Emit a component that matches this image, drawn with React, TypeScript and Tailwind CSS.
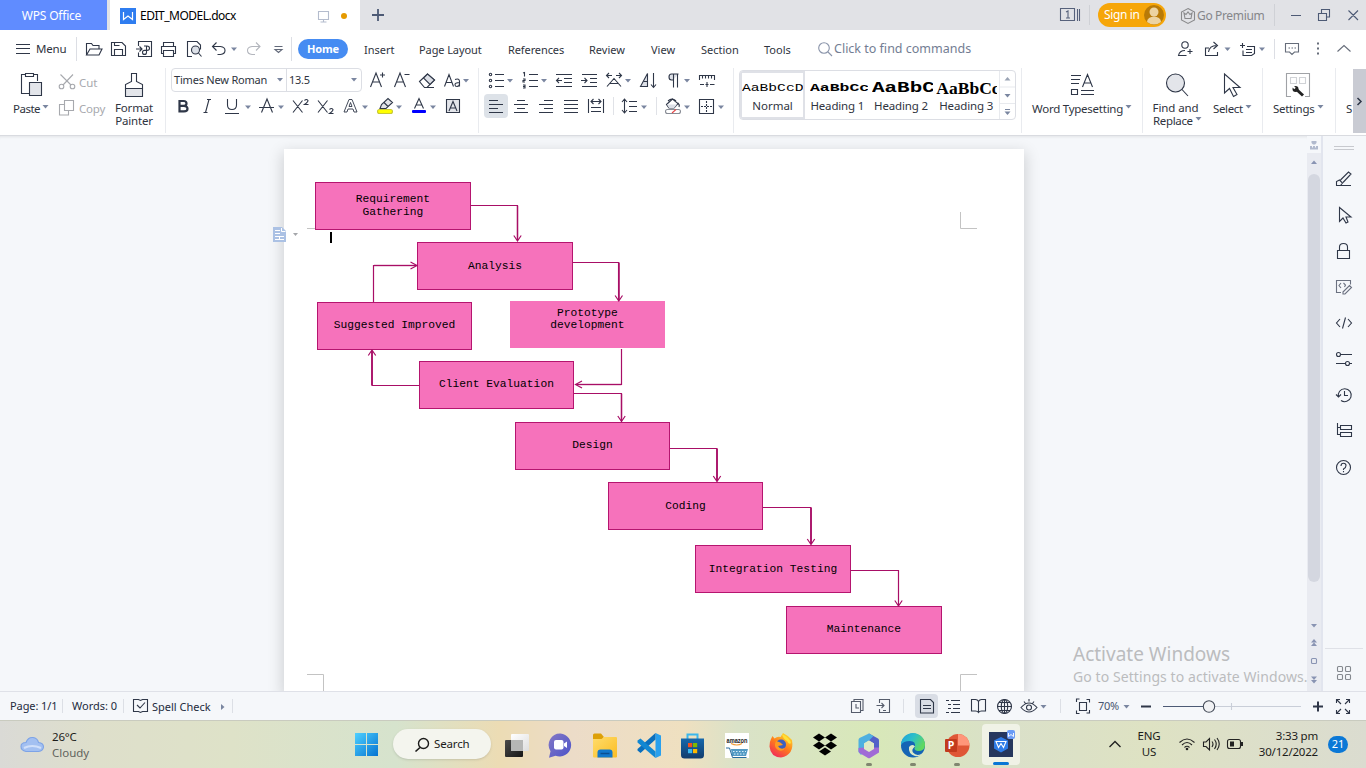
import React from "react";

const INK = "#2f3748";
const MUTED = "#7a86a0";

type IconProps = {
  x: number;
  w: number;
  y?: number;
  h?: number;
  color?: string;
  children?: React.ReactNode;
};

/* Toolbar glyphs share one window-wide coordinate space; each svg shows its own slot of it. */
function Icon({ x, w, y = 0, h = 24, color = INK, children }: IconProps) {
  return (
    <svg
      className="shrink-0"
      width={w}
      height={h}
      viewBox={`${x} ${y} ${w} ${h}`}
      fill="none"
      stroke={color}
      strokeWidth="1.1"
    >
      {children}
    </svg>
  );
}

const MenuIcon = (p: IconProps) => <Icon y={30} h={38} {...p} />;
const Row1 = (p: IconProps) => <Icon y={68} h={24} {...p} />;
const Row2 = (p: IconProps) => <Icon y={92} h={28} {...p} />;
const StatusIcon = (p: IconProps) => <Icon y={692} h={28} {...p} />;
const TaskIcon = (p: IconProps) => <Icon y={720} h={48} {...p} />;

function Down({ x, y }: { x: number; y: number }) {
  return <path d={`M${x} ${y}h6l-3 3.4z`} fill={MUTED} stroke="none" />;
}

function TitleBar() {
  return (
    <div className="flex h-[30px] items-center bg-[#e1e2e6] whitespace-nowrap">
      <div className="flex h-full w-[107px] items-center justify-center bg-[#608cff] pt-px pr-1 text-[12px] text-white">
        <span className="tracking-[-0.2px]">WPS Office</span>
      </div>
      <div className="ml-[3px] flex h-full w-[250px] items-center bg-white text-[12px] text-black">
        <Icon x={110} w={30} y={0} h={30}>
          <rect x="120" y="8" width="16" height="16" fill="#2f7df0" stroke="none" />
          <path d="M123.500 12v7.500l4.500-3.500 4.500 3.500V12" stroke="#fff" strokeWidth="1.200" />
        </Icon>
        <span className="w-[174px] pt-px tracking-[-0.500px]">EDIT_MODEL.docx</span>
        <Icon x={314} w={46} y={0} h={30} color="#b4bccd">
          <path d="M318.500 11.500h10v8h-10zM323.500 19.500v3M320.500 22h6" />
          <circle cx="344" cy="16" r="3" fill="#e59a00" stroke="none" />
        </Icon>
      </div>
      <Icon x={360} w={40} y={0} h={30}>
        <path d="M372 15h12M378 9v12" stroke="#4d5a75" strokeWidth="1.800" />
      </Icon>
      <div className="flex-1" />
      <Icon x={1050} w={39} y={0} h={30} color="#56617b">
        <path d="M1060.500 8.500h14v12h-14zM1077.500 9v12M1079.500 9v12" />
        <path d="M1066 12l2-1v7M1066 18h4" />
      </Icon>
      <div className="h-[20px] w-px bg-[#cfd1d6]" />
      <div className="ml-2 flex h-6 w-[68px] items-center rounded-full bg-[#f6a609] pl-[6px] text-[12px] text-white">
        <span className="w-[40px] tracking-[-0.350px]">Sign in</span>
        <Icon x={1144} w={20} y={5} h={20}>
          <circle cx="1154" cy="15" r="10" fill="#b87a08" stroke="none" />
          <circle cx="1154" cy="12" r="4.500" fill="#ecd3a2" stroke="none" />
          <path d="M1147 22a7 5.500 0 0 1 14 0q-7 5-14 0" fill="#ecd3a2" stroke="none" />
        </Icon>
      </div>
      <Icon x={1166} w={31} y={0} h={30} color="#8a8a8c">
        <path d="M1188 8.500l6.500 3.500v8l-6.500 3.500-6.500-3.500v-8z" />
        <path d="M1184 13l2 1.500 2-2.500 2 2.500 2-1.500-1 5.500h-6z" />
      </Icon>
      <div className="w-[77px] pt-px text-[12px] tracking-[-0.350px] text-[#85868a]">Go Premium</div>
      <div className="h-[22px] w-px bg-[#cfd1d6]" />
      <Icon x={1275} w={91} y={0} h={30} color="#4d5a75">
        <path d="M1291 15.500h10M1318.500 13.500h8v7h-8zM1321.500 13v-3.500h8v7.500h-3M1348.500 10.500l9.500 9.500M1358 10.500l-9.500 9.500" />
      </Icon>
    </div>
  );
}

function MenuBar() {
  return (
    <div className="flex h-[38px] items-center bg-white text-[11px] whitespace-nowrap text-[#2f3440]">
      <MenuIcon x={0} w={36}>
        <path d="M16 44.500h14M16 48.500h14M16 53.500h14" />
      </MenuIcon>
      <span className="w-[40px] text-[11.500px] tracking-[-0.200px]">Menu</span>
      <div className="h-6 w-px bg-[#dcdee4]" />
      <MenuIcon x={77} w={29}>
        <path d="M86.500 55V43.500h5l1.500 2h6V49M86.500 55h12.500l3-6H90z" />
      </MenuIcon>
      <MenuIcon x={106} w={25}>
        <path d="M111.500 42.500h10.500l3.500 3.500v9.500h-14zM114.500 55.500v-6h8v6M114.500 42.500v3h5" />
      </MenuIcon>
      <MenuIcon x={131} w={26}>
        <path d="M138.500 46v-4.500h13v15h-13v-4M136 49h6M139.500 46.500l2.500 2.500-2.500 2.500M144 46h3q2.500 0 2.500 2.200t-2.500 2.200h-2.500q-2 0-2 2t2 2 2-2V46" />
      </MenuIcon>
      <MenuIcon x={157} w={24}>
        <path d="M163.500 46.500v-4h10v4M163.500 53.500h-2v-7h14v7h-2M163.500 50.500h10v6h-10z" />
      </MenuIcon>
      <MenuIcon x={181} w={25}>
        <path d="M192 56.500h-4.500v-15h9.500l3.500 3.500v4.500" />
        <circle cx="195.500" cy="50" r="4" fill="#dde1e8" />
        <path d="M198.500 53l3 3.500" />
      </MenuIcon>
      <MenuIcon x={206} w={36}>
        <path d="M216.500 42.500l-4 4 4 4M213 46.500h7.500q4.500.5 4.500 4t-4.500 4h-3" />
        <Down x={231} y={47.500} />
      </MenuIcon>
      <MenuIcon x={242} w={26} color="#b3b6bd">
        <path d="M256 42.500l4 4-4 4M259.500 46.500H252q-4.500.5-4.500 4t4.500 4h3" />
      </MenuIcon>
      <MenuIcon x={268} w={23} color="#626979">
        <path d="M274.500 46.500h8M275 49.500h7l-3.500 3z" />
      </MenuIcon>
      <div className="h-6 w-px bg-[#dcdee4]" />
      <div className="ml-[6px] flex h-5 w-[50px] items-center justify-center rounded-full bg-[#468cf2] text-[11px] font-bold tracking-[-0.200px] text-white">
        Home
      </div>
      <span className="ml-4 w-[55px] pt-[2px]">Insert</span>
      <span className="w-[89px] pt-[2px] tracking-[-0.100px]">Page Layout</span>
      <span className="w-[81px] pt-[2px] tracking-[-0.100px]">References</span>
      <span className="w-[62px] pt-[2px]">Review</span>
      <span className="w-[50px] pt-[2px]">View</span>
      <span className="w-[63px] pt-[2px]">Section</span>
      <span className="w-[48px] pt-[2px]">Tools</span>
      <MenuIcon x={812} w={22} color="#8a94aa">
        <circle cx="824" cy="48" r="5.300" />
        <path d="M828 52l4 4" />
      </MenuIcon>
      <span className="pt-px text-[12.500px] text-[#737d93]">Click to find commands</span>
      <div className="flex-1" />
      <MenuIcon x={1170} w={30}>
        <circle cx="1185" cy="45" r="3.200" />
        <path d="M1185 50.500q-5.500 0-6.500 5h8M1187.500 51.500h5M1190 49v5" />
      </MenuIcon>
      <MenuIcon x={1200} w={36}>
        <path d="M1209 48h-3.500v7.500h12V52M1208.500 52q1-6.500 8-6.500M1213.500 42l4 3.500-4 3.500" />
        <Down x={1224.500} y={47.500} />
      </MenuIcon>
      <MenuIcon x={1236} w={38}>
        <path d="M1240 45.500h5M1242.500 43v5M1247 46.500h7.500v7l-3 2h-8.500v-5M1246 49.500h6M1246 52.500h6" />
        <Down x={1259} y={47.500} />
      </MenuIcon>
      <div className="h-5 w-px bg-[#dcdee4]" />
      <MenuIcon x={1275} w={91} color="#666d7a">
        <path d="M1285.500 43.500h13v8.500h-4l-2.500 2.500-2.500-2.500h-4z" />
        <path d="M1288.500 48h1.500M1291.500 48h1.500M1294.500 48h1.500M1337.500 51.500l6.500-6 6.500 6" />
        <path d="M1317 43.500h2M1317 48.500h2M1317 53.500h2" strokeWidth="2" />
      </MenuIcon>
    </div>
  );
}

function Divider() {
  return <div className="h-[65px] w-px shrink-0 bg-[#e9ebef]" />;
}

function Clipboard() {
  return (
    <div className="flex w-[165px] shrink-0">
      <div className="w-[55px]">
        <Icon x={0} w={55} y={68} h={33}>
          <path d="M29 93.500h-7.500v-19h4M33.500 74.500h4V81M25.500 73.500h8v3h-8z" />
          <path d="M29.500 82.500h12v13h-12z" fill="#e3e5ea" />
        </Icon>
        <div className="flex h-[15px] items-center pl-[13px]">
          <span className="w-[29px] tracking-[-0.500px]">Paste</span>
          <Icon x={42} w={8} y={101} h={12}><Down x={42.500} y={103} /></Icon>
        </div>
      </div>
      <div className="w-[53px] pt-px text-[#a7a9ae]">
        <div className="flex h-[26px] items-center">
          <Icon x={55} w={24} y={69} h={26} color="#a7a9ae">
            <circle cx="61.500" cy="86.500" r="2.300" />
            <circle cx="72.500" cy="86.500" r="2.300" />
            <path d="M60.500 74.500l10.500 10.500M73 74.500l-10 10.500" />
          </Icon>
          <span className="pt-px">Cut</span>
        </div>
        <div className="flex h-[27px] items-center">
          <Icon x={55} w={24} y={95} h={27} color="#a7a9ae">
            <path d="M64.500 100.500h9v10h-9zM64.500 104.500h-5v10.500h9v-4" />
          </Icon>
          <span className="tracking-[-0.200px]">Copy</span>
        </div>
      </div>
      <div className="w-[52px] text-center">
        <Icon x={108} w={52} y={68} h={33}>
          <path d="M125.500 88.500v-4l6-3v-8h5v8l6 3v4" />
          <path d="M125.500 88.500h17v8h-17z" fill="#e3e5ea" />
        </Icon>
        <div className="leading-[13px] tracking-[-0.200px]">Format<br />Painter</div>
      </div>
    </div>
  );
}

function FontGroup() {
  return (
    <div className="w-[312px] shrink-0">
      <div className="flex h-[24px] items-center pl-[5px]">
        <div className="flex h-6 w-[191px] items-center rounded-sm border border-[#dcdee4] text-[11px]">
          <span className="w-[104px] pt-px pl-[2px] tracking-[-0.200px]">Times New Roman</span>
          <Icon x={276} w={10} y={68} h={20}><Down x={277} y={76} /></Icon>
          <div className="h-full w-px bg-[#dcdee4]" />
          <span className="w-[64px] pt-px pl-[2px] tracking-[-0.300px]">13.5</span>
          <Icon x={352} w={8} y={68} h={20}><Down x={352} y={76} /></Icon>
        </div>
        <Row1 x={362} w={27}>
          <path d="M370.500 87l5.500-14 5.500 14M372.500 82h7M380 75h5M382.500 72.500v5" />
        </Row1>
        <Row1 x={389} w={25}>
          <path d="M394.500 87l5.500-14 5.500 14M396.500 82h7M404.500 74.500h5" />
        </Row1>
        <Row1 x={414} w={26}>
          <path d="M419.500 81.500l8-7.500 7 6-7.500 7.500h-2.500zM426 87.500h8" />
          <path d="M423.500 78l4-4 7 6-4.500 4.500z" fill="#dde0e7" />
        </Row1>
        <Row1 x={440} w={34}>
          <path d="M444.500 86.500l4.500-12 4.500 12M446 82.500h6M455 79.500q4.500-1.500 4.500 2v5M459.500 82.500q-4.500 0-4.500 2.200 0 1.800 2 1.800 2.500-.5 2.500-2.500" />
          <Down x={463} y={79} />
        </Row1>
      </div>
      <div className="flex h-[28px] items-center">
        <Row2 x={166} w={30}>
          <path d="M179.500 101h4q3 0 3 2.400t-3 2.400h-4zM179.500 106h4.500q3.500 0 3.500 2.700t-3.500 2.700h-4.500z" strokeWidth="2.200" />
        </Row2>
        <Row2 x={196} w={24}>
          <path d="M207 99.500h4M203.500 112.500h4M209 99.500l-3.500 13" />
        </Row2>
        <Row2 x={220} w={34}>
          <path d="M227.500 99v6q0 4.500 4.500 4.500t4.500-4.500v-6M225 113.500h14" />
          <Down x={245} y={105.500} />
        </Row2>
        <Row2 x={254} w={34}>
          <path d="M261.500 112.500l5.500-13.500 5.500 13.500M259 107.500h15" />
          <Down x={278} y={105.500} />
        </Row2>
        <Row2 x={288} w={26}>
          <path d="M293 100.500l9.500 12M302.500 100.500l-9.500 12M304.500 100.500q2-2 3.500 0 0 1.500-3.500 4h4" />
        </Row2>
        <Row2 x={314} w={25}>
          <path d="M318 100.500l9.500 12M327.500 100.500l-9.500 12M329.500 109.500q2-2 3.500 0 0 1.500-3.500 4h4" />
        </Row2>
        <Row2 x={339} w={33}>
          <path d="M344 112l5-12.500h3l5 12.500h-3l-1-3h-5l-1 3zM349 106.500h3l-1.500-4z" strokeWidth=".9" />
          <Down x={362} y={105.500} />
        </Row2>
        <Row2 x={372} w={33}>
          <path d="M380 108.500l1.500-4 6.500-6 4.500 4-6.500 6zM384 102.500l4 4" fill="#e3e5ea" />
          <rect x="377.500" y="109.500" width="15" height="4" rx="2" fill="#ffff00" stroke="#c9c936" />
          <Down x={396} y={105.500} />
        </Row2>
        <Row2 x={405} w={34}>
          <path d="M414.500 108.500l4.500-10 4.500 10M416 105h6" />
          <rect x="412" y="110" width="14" height="3" rx="1" fill="#0000ff" stroke="none" />
          <Down x={430} y={105.500} />
        </Row2>
        <Row2 x={439} w={35}>
          <path d="M446.500 99.500h13v13h-13z" fill="#e3e5ea" />
          <path d="M449 111l4-9.500 4 9.500M450.500 108h5" />
        </Row2>
      </div>
    </div>
  );
}

function ParagraphGroup() {
  return (
    <div className="w-[254px] shrink-0">
      <div className="flex h-[24px] items-center">
        <Row1 x={479} w={38}>
          <circle cx="490.500" cy="74.500" r="1.200" /><circle cx="490.500" cy="80.500" r="1.200" /><circle cx="490.500" cy="86.500" r="1.200" />
          <path d="M495 74.500h9M495 80.500h9M495 86.500h9" />
          <Down x={507} y={79} />
        </Row1>
        <Row1 x={517} w={34}>
          <path d="M523 73l1.500-.5v4M523 79h2v1.500h-2V82h2M523 85h2v3h-2M523 86.500h2M529 74.500h9M529 80.500h9M529 86.500h9" />
          <Down x={541} y={79} />
        </Row1>
        <Row1 x={551} w={25}>
          <path d="M556 74.500h16M564 78.500h8M564 82.500h8M556 86.500h16M556.500 80.500h5.500M559 78l-2.500 2.500 2.500 2.500" />
        </Row1>
        <Row1 x={576} w={25}>
          <path d="M582 74.500h15M590 78.500h7M590 82.500h7M582 86.500h15M581 80.500h5.500M584.500 78l2.500 2.500-2.500 2.500" />
        </Row1>
        <Row1 x={601} w={33}>
          <path d="M607 86.500l7-8 7 8M610 83.500h8M606.500 75.500h5.500M609 73l-2.500 2.500 2.500 2.500M616 75.500h5.500M619 73l2.500 2.500-2.500 2.500" />
          <Down x={625} y={79} />
        </Row1>
        <Row1 x={634} w={28}>
          <path d="M640.500 86.500l7-13v13z" fill="#dde0e7" />
          <path d="M643.500 81.500h4M653.500 73v14M651 84.500l2.500 3 2.500-3" />
        </Row1>
        <Row1 x={662} w={32}>
          <path d="M678.500 74h-7q-2.500 0-2.500 3t2.500 3h1.500" fill="#dde0e7" />
          <path d="M673.500 74v13.500M677.500 74v13.500" />
          <Down x={684} y={79} />
        </Row1>
        <Row1 x={694} w={30}>
          <path d="M699.500 80v-4.500h15V80M702.500 76v2.500M705.500 76v2.500M708.500 76v2.500M711.500 76v2.500M700 84.500h4M705.500 84.500h3M707 82v5M710 84.500h4.500" />
        </Row1>
      </div>
      <div className="flex h-[28px] items-center pl-[5px]">
        <div className="flex h-6 w-6 items-center rounded-sm bg-[#dde2e8]">
          <Icon x={484} w={24} y={94} h={24}>
            <path d="M489 100.500h9M489 104.500h14M489 108.500h9M489 112.500h14" />
          </Icon>
        </div>
        <Row2 x={508} w={26}><path d="M517 100.500h8M514 104.500h14M517 108.500h8M514 112.500h14" /></Row2>
        <Row2 x={534} w={25}><path d="M544 100.500h9M539 104.500h14M544 108.500h9M539 112.500h14" /></Row2>
        <Row2 x={559} w={25}><path d="M564 100.500h14M564 104.500h14M564 108.500h14M564 112.500h14" /></Row2>
        <Row2 x={584} w={29}>
          <path d="M588.500 99v14M603.500 99v14M591 101.500h10M593.500 99l-2.500 2.500 2.500 2.500M598.500 99l2.500 2.500-2.500 2.500M591 107.500h10M591 111.500h10" />
        </Row2>
        <div className="h-[18px] w-px bg-[#e0e2e7]" />
        <Row2 x={614} w={42}>
          <path d="M624.500 99.500v13M622 102l2.500-3 2.500 3M622 110l2.500 3 2.500-3M629 101.500h8M629 106.500h8M629 111.500h8" />
          <Down x={641} y={105.500} />
        </Row2>
        <div className="h-[18px] w-px bg-[#e0e2e7]" />
        <Row2 x={657} w={37}>
          <path d="M666.500 104.500l6-5.500 5.500 4.500-4 4.500h-5zM668 101q4-4 8 0M678 103q2 2 1 4" />
          <path d="M667 104.500h10l-3 3.500h-5z" fill="#dde0e7" stroke="none" />
          <rect x="665.500" y="109.500" width="15" height="4" rx="2" fill="#fff" stroke="#888c95" />
          <path d="M672 113l4-3.500" stroke="#e54848" />
          <Down x={684} y={105.500} />
        </Row2>
        <Row2 x={694} w={34}>
          <path d="M699.500 99.500h14v14h-14z" />
          <path d="M706.500 101v11M701 106.500h11" strokeDasharray="2 1" />
          <Down x={718} y={105.500} />
        </Row2>
      </div>
    </div>
  );
}

function StyleGallery() {
  return (
    <div className="mt-[2px] ml-[5px] flex h-[50px] w-[277px] shrink-0 overflow-hidden rounded-sm border border-[#dcdee4] text-center text-[#2f3440]">
      <div className="flex h-full w-[65px] flex-col border-2 border-[#dfe1e7]">
        <div className="mt-[6px] h-[18px] w-[61px] overflow-hidden">
          <div className="w-max origin-left scale-x-130 text-left font-['Liberation_Mono'] text-[11.250px] leading-[18px] text-black">AaBbCcD</div>
        </div>
        <div className="mt-px leading-[16px]">Normal</div>
      </div>
      <div className="flex h-full w-[64px] flex-col pt-[2px]">
        <div className="mt-[6px] ml-[5px] h-[18px] w-[58px] overflow-hidden">
          <div className="w-max origin-left scale-x-140 text-left font-['Liberation_Mono'] text-[11.750px] leading-[18px] font-semibold text-black">AaBbCc</div>
        </div>
        <div className="mt-px ml-px leading-[16px] tracking-[-0.150px] whitespace-nowrap">Heading 1</div>
      </div>
      <div className="flex h-full w-[65px] flex-col pt-[2px]">
        <div className="mt-[6px] ml-[3px] h-[18px] w-[61px] overflow-hidden">
          <div className="w-max origin-left scale-x-135 text-left font-['Liberation_Mono'] text-[15.500px] leading-[18px] font-bold text-black">AaBbC</div>
        </div>
        <div className="mt-px leading-[16px] tracking-[-0.150px] whitespace-nowrap">Heading 2</div>
      </div>
      <div className="flex h-full w-[66px] flex-col pt-[2px]">
        <div className="mt-[6px] ml-[3px] h-[18px] w-[61px] overflow-hidden text-left font-['Liberation_Serif'] text-[17.500px] leading-[18px] font-bold text-black">
          AaBbCc
        </div>
        <div className="mt-px leading-[16px] tracking-[-0.150px] whitespace-nowrap">Heading 3</div>
      </div>
      <div className="h-full border-l border-[#e8eaee]">
        <Icon x={1000} w={15} y={71} h={48}>
          <path d="M1004.500 80.500h6l-3-3.500z" fill="#9aa3b4" stroke="none" />
          <path d="M1000 87h15M1000 103.500h15" stroke="#e8eaee" />
          <Down x={1004.500} y={94} />
          <path d="M1005 109.500h5" stroke={MUTED} />
          <Down x={1004.500} y={111.500} />
        </Icon>
      </div>
    </div>
  );
}

function Ribbon() {
  return (
    <div className="flex h-[68px] border-b border-[#d9dbe0] bg-white text-[11.500px] whitespace-nowrap text-[#2f3440]">
      <Clipboard />
      <Divider />
      <FontGroup />
      <Divider />
      <ParagraphGroup />
      <Divider />
      <StyleGallery />
      <div className="ml-[5px]"><Divider /></div>
      <div className="w-[120px] shrink-0">
        <Icon x={1022} w={120} y={68} h={33}>
          <path d="M1071 75.500h10M1071 79.500h9M1071 83.500h8M1071.500 89.500h6v5h-6zM1081 90.500h13M1081 94.500h13M1082.500 87l5-12.500 5 12.500M1084.500 83h6.500" />
        </Icon>
        <div className="flex h-[15px] items-center pl-[10px]">
          <span className="w-[93px] tracking-[-0.250px]">Word Typesetting</span>
          <Icon x={1125} w={8} y={101} h={12}><Down x={1125.500} y={103} /></Icon>
        </div>
      </div>
      <Divider />
      <div className="w-[65px] shrink-0 text-center">
        <Icon x={1143} w={65} y={68} h={33}>
          <circle cx="1175.500" cy="83" r="9" fill="#e3e5ea" />
          <path d="M1182 89.500l6 6.500" />
        </Icon>
        <div className="leading-[13px] tracking-[-0.100px]">Find and</div>
        <div className="flex h-[13px] items-center pl-[10px]">
          <span className="w-[42px] text-left tracking-[-0.350px]">Replace</span>
          <Icon x={1195} w={8} y={101} h={12}><Down x={1195.500} y={103} /></Icon>
        </div>
      </div>
      <div className="w-[54px] shrink-0">
        <Icon x={1208} w={54} y={68} h={33}>
          <path d="M1224.500 74v19l5-4.500 4 8 3.500-2-4-7h7z" />
        </Icon>
        <div className="flex h-[15px] items-center pl-[5px]">
          <span className="w-[32px] tracking-[-0.350px]">Select</span>
          <Icon x={1245} w={8} y={101} h={12}><Down x={1245.500} y={103} /></Icon>
        </div>
      </div>
      <Divider />
      <div className="w-[72px] shrink-0">
        <Icon x={1263} w={72} y={68} h={33} color="#a0a2a6">
          <path d="M1291 96.500h-4.500v-23h23v23h-4.500" />
          <path d="M1290.500 77.500h6v6h-6zM1299.500 77.500h6v6h-6z" stroke="#d0d2d6" />
          <path d="M1296 89l7 6.500" stroke="#222" strokeWidth="3" />
          <circle cx="1295.500" cy="89" r="3" fill="#222" stroke="none" />
          <path d="M1292.500 86l2.500 2.500" stroke="#fff" strokeWidth="2" />
        </Icon>
        <div className="flex h-[15px] items-center pl-[10px]">
          <span className="w-[44px] tracking-[-0.300px]">Settings</span>
          <Icon x={1317} w={8} y={101} h={12}><Down x={1317.500} y={103} /></Icon>
        </div>
      </div>
      <Divider />
      <div className="w-[17px] shrink-0 overflow-hidden pt-[33px] pl-[10px] leading-[15px]">S</div>
      <div className="mt-px h-16 w-[13px] shrink-0 bg-[#c9cbd3]">
        <Icon x={1353} w={13} y={69} h={64}><path d="M1357.500 98l3.500 3.500-3.500 3.500" strokeWidth="1.500" /></Icon>
      </div>
    </div>
  );
}

/* Diagram nodes, positioned on the page canvas. */
const nodes: { box: string; lines: string[] }[] = [
  { box: "left-[31px] top-[33px] w-[156px] h-[48px] border border-[#b5156f] items-center pb-px leading-[13px]", lines: ["Requirement", "Gathering"] },
  { box: "left-[133px] top-[93px] w-[156px] h-[48px] border border-[#b5156f] items-center leading-[12px]", lines: ["Analysis"] },
  { box: "left-[33px] top-[153px] w-[155px] h-[48px] border border-[#b5156f] items-center pb-[2px] leading-[12px]", lines: ["Suggested Improved"] },
  { box: "left-[226px] top-[152px] w-[155px] h-[47px] pt-[6px] items-start leading-[12px]", lines: ["Prototype", "development"] },
  { box: "left-[135px] top-[212px] w-[155px] h-[48px] border border-[#b5156f] items-center pb-[2px] leading-[12px]", lines: ["Client Evaluation"] },
  { box: "left-[231px] top-[273px] w-[155px] h-[48px] border border-[#b5156f] items-center pb-[2px] leading-[12px]", lines: ["Design"] },
  { box: "left-[324px] top-[333px] w-[155px] h-[48px] border border-[#b5156f] items-center leading-[12px]", lines: ["Coding"] },
  { box: "left-[411px] top-[396px] w-[156px] h-[48px] border border-[#b5156f] items-center leading-[12px]", lines: ["Integration Testing"] },
  { box: "left-[502px] top-[457px] w-[156px] h-[48px] border border-[#b5156f] items-center pb-[2px] leading-[12px]", lines: ["Maintenance"] },
];

function Page() {
  return (
    <div className="relative mt-[13px] ml-[284px] h-[542px] w-[740px] bg-white shadow-[0_5px_14px_2px_rgba(0,0,0,0.15)]">
      <svg className="absolute inset-0" width="740" height="542" viewBox="284 149 740 542" fill="none" stroke="#c3c3c3">
        <path d="M307 228.500h16M960.500 212v16.500H977M307 674.500h16.500V691M977 674.500h-16.500V691" />
      </svg>
      {nodes.map((n) => (
        <div
          key={n.lines[0]}
          className={"absolute flex justify-center bg-[#f672bb] text-center font-['Liberation_Mono',monospace] text-[11.250px] text-black whitespace-nowrap " + n.box}
        >
          <div>{n.lines.map((l) => <div key={l}>{l}</div>)}</div>
        </div>
      ))}
      <svg className="absolute inset-0" width="740" height="542" viewBox="284 149 740 542" fill="none">
        <g stroke="#a80e66" strokeOpacity=".18" strokeWidth="3">
          <path d="M517.500 206v33M374 265.500h41M621.500 384.500H578M621.500 394v27" />
        </g>
        <g stroke="#a80e66" strokeWidth="1.200">
          <path d="M471 205.500h47M517.500 205v36M513.800 235.500l3.700 5.500 3.700-5.500" />
          <path d="M573 262.500h46M618.800 262v39M615.100 295.500l3.700 5.500 3.700-5.500" />
          <path d="M373.500 302v-36.500H417M410.500 262l6.500 3.500-6.500 3.500" />
          <path d="M419 385.500h-47v-35.500M368.300 355.500l3.700-5.500 3.700 5.500" />
          <path d="M621.500 349v35.500H575.500M582 381l-6.500 3.500 6.500 3.500" />
          <path d="M574 393.500h47.500V422M617.800 416l3.700 5.500 3.700-5.500" />
          <path d="M670 448.500h47V482M713.300 476l3.700 5.500 3.700-5.500" />
          <path d="M763 507.500h48V545M807.300 539l3.700 5.500 3.700-5.500" />
          <path d="M851 570.500h47.500V606M894.800 600.500l3.700 5.500 3.700-5.500" />
        </g>
        <g stroke="#a80e66" strokeWidth="1.700">
          <path d="M618.800 263v37M372 385v-33M717 449v32M811 508v36M513 0" />
        </g>
      </svg>
      <div className="absolute top-[83px] left-[46px] h-[11px] w-[2px] bg-black" />
      <svg className="absolute top-[78px] left-[-11px]" width="28" height="16" viewBox="273 227 28 16" fill="none">
        <path d="M273 227h9l4 4v11h-13z" fill="#abc1e4" />
        <path d="M275 230.500h5M275 233.500h5M275 236.500h9M279.500 236v4M275 239.500h9M281.500 228v3.500h4" stroke="#fff" />
        <path d="M293 233h5l-2.500 3z" fill="#a4a6aa" />
      </svg>
    </div>
  );
}

const SideIcon = ({ y, color, children }: { y: number; color?: string; children: React.ReactNode }) => (
  <Icon x={1323} w={43} y={y} h={36} color={color}>{children}</Icon>
);

function Workspace() {
  return (
    <div className="relative flex h-[555px] bg-[#f5f7fa]">
      <div className="h-full w-[1307px] overflow-hidden shadow-[inset_0_3px_3px_-2px_rgba(0,0,0,0.08)]"><Page /></div>
      <div className="flex h-full w-[14px] flex-col bg-[#e9ebf1]">
        <div className="h-[17px] bg-[#f5f7fa]">
          <Icon x={1307} w={14} y={136} h={17}>
            <path d="M1311.500 141h5v2l-1.500 1.500h-2l-1.500-1.500zM1310 146h2v1.500h1V146h2v1.500h1V146h2v3.500h-8z" fill="#b0b9cd" stroke="none" />
          </Icon>
        </div>
        <Icon x={1307} w={14} y={153} h={21}><path d="M1311 164h6l-3-3.500z" fill="#8994b3" stroke="none" /></Icon>
        <div className="ml-px h-[408px] w-[12px] rounded-full bg-[#d4d7e0]" />
        <div className="flex-1" />
        <Icon x={1307} w={14} y={615} h={76} color="#8994b3">
          <path d="M1311 624h6l-3 3.500zM1311 642.500h6l-3-3.500zM1311 646h6l-3-3.500zM1311 676.500h6l-3 3.500zM1311 680h6l-3 3.500z" fill="#8994b3" stroke="none" />
          <rect x="1311.500" y="658.500" width="5" height="5" rx="1" />
        </Icon>
      </div>
      <div className="h-full w-[2px] bg-[#e2e5ee]" />
      <div className="flex h-full w-[43px] flex-col">
        <Icon x={1323} w={43} y={136} h={25} color="#c7c9ce"><path d="M1334 146.500h20M1334 149.500h20" /></Icon>
        <SideIcon y={161}>
          <path d="M1336 185.500h15M1336.500 185.500v-4l3-1.500 3 3-2 2.500M1340.500 180l8-8 2.500 2-8 8.500" />
        </SideIcon>
        <SideIcon y={197}><path d="M1339.500 207.500v14l3.500-3.500 3 5 2-1-2-5h5z" /></SideIcon>
        <SideIcon y={233}><path d="M1337.500 250.500h12v8h-12zM1339.500 250v-3q0-3.500 4-3.500t4 3.500v3" /></SideIcon>
        <SideIcon y={269} color="#6b7180">
          <path d="M1341 292.500h-4.500v-12h14v4M1341 283l-2 2.500 2 2.500M1343.500 283l2 2-1 2M1343 292l6.500-6.500 2 2-6.500 6.500h-2z" />
        </SideIcon>
        <SideIcon y={305}><path d="M1340 319l-3.500 4 3.500 4M1348 319l3.500 4-3.500 4M1345.500 317.500l-3 11" /></SideIcon>
        <SideIcon y={341}>
          <circle cx="1338.500" cy="354.500" r="2" /><circle cx="1347.500" cy="363.500" r="2" />
          <path d="M1341 354.500h11M1336 363.500h9.500M1349.500 363.500h2.500" />
        </SideIcon>
        <SideIcon y={377}>
          <path d="M1338.500 397a6.500 6.500 0 1 1 2.500 3.500M1336 394.500l2.500 2.500 2.500-2.500M1344.500 391v4.500h3.500" />
        </SideIcon>
        <SideIcon y={413}><path d="M1337.500 423v11.500h2.500M1337.500 427.500h2.500M1340.500 425.500h11v4h-11zM1340.500 432.500h11v4h-11z" /></SideIcon>
        <SideIcon y={449}>
          <circle cx="1343.500" cy="467.500" r="7" />
          <path d="M1341 466q0-2.800 2.500-2.800t2.500 2.300-2.500 3.500v1M1343.500 471v1.200" />
        </SideIcon>
        <div className="flex-1" />
        <Icon x={1323} w={43} y={640} h={51} color="#85898f">
          <path d="M1325 648.500h38" stroke="#dfe1e7" />
          <rect x="1337.500" y="666.500" width="5" height="5" rx="1" /><rect x="1345.500" y="666.500" width="5" height="5" rx="1" />
          <rect x="1337.500" y="674.500" width="5" height="5" rx="1" /><rect x="1345.500" y="674.500" width="5" height="5" rx="1" />
        </Icon>
      </div>
      <div className="absolute top-[506px] left-[1073px] whitespace-nowrap text-[#bbbcbe]">
        <div className="text-[19px] leading-[25px]">Activate Windows</div>
        <div className="text-[14px] leading-[20px] tracking-[0.080px]">Go to Settings to activate Windows.</div>
      </div>
    </div>
  );
}

function StatusBar() {
  return (
    <div className="flex h-[29px] items-center border-t border-[#dfe1e8] bg-[#f5f7fa] text-[11px] whitespace-nowrap text-[#232b3d]">
      <span className="w-[62px] pt-px pl-[10px] tracking-[-0.100px]">Page: 1/1</span>
      <div className="h-[14px] w-px bg-[#dcdfe5]" />
      <span className="w-[60px] pt-px pl-[9px]">Words: 0</span>
      <div className="h-[14px] w-px bg-[#dcdfe5]" />
      <StatusIcon x={124} w={28}>
        <path d="M133.500 699.500h5l2 1 2-1h5v12h-5l-2 1-2-1h-5zM137 705l3 3 5-5.500" />
      </StatusIcon>
      <span className="w-[64px] pt-[3px]">Spell Check</span>
      <StatusIcon x={216} w={16}><path d="M221 704l3.500 3-3.500 3z" fill={MUTED} stroke="none" /></StatusIcon>
      <div className="h-[14px] w-px bg-[#dcdfe5]" />
      <div className="flex-1" />
      <StatusIcon x={840} w={30} color="#555c6b">
        <path d="M851.500 701.500h9v11h-9zM854 701v-1.500h9v11h-2M856 704v4h3" />
      </StatusIcon>
      <StatusIcon x={870} w={33} color="#555c6b">
        <path d="M879.500 703v-3.500h10v13h-10V709M876.500 705.500h7M881.500 703l2.500 2.500-2.500 2.500M883 710.500h3" />
      </StatusIcon>
      <div className="h-[14px] w-px bg-[#dcdfe5]" />
      <div className="ml-[11px] h-6 w-[23px] rounded-sm bg-[#d9dde5]">
        <Icon x={915} w={23} y={694} h={24}>
          <path d="M920.500 699.500h10l3 3v10.500h-13zM923 705.500h8M923 708.500h8" />
        </Icon>
      </div>
      <StatusIcon x={938} w={27}>
        <path d="M946 700.500h3M951 700.500h9M948 704.500h3M953 704.500h7M948 708.500h3M953 708.500h7M946 712.500h3M951 712.500h9" />
      </StatusIcon>
      <StatusIcon x={965} w={27}><path d="M978.500 701.500q-1-2-3-2h-4v11.500h4q2 0 3 1.500 1-1.500 3-1.500h4v-11.500h-4q-2 0-3 2zv11" /></StatusIcon>
      <StatusIcon x={992} w={25}>
        <circle cx="1004.500" cy="706.500" r="7" /><ellipse cx="1004.500" cy="706.500" rx="3.200" ry="7" />
        <path d="M997.500 706.500h14M1004.500 699.500v14M999 702.500h11M999 710.500h11" />
      </StatusIcon>
      <StatusIcon x={1017} w={43}>
        <path d="M1021 707.500q8-9 16 0-8 9-16 0zM1024 701.500l1.500 2M1029 699v2.500M1034 701.500l-1.500 2" />
        <circle cx="1029" cy="707.500" r="2.500" />
        <Down x={1040.500} y={705} />
      </StatusIcon>
      <div className="h-[14px] w-px bg-[#dcdfe5]" />
      <StatusIcon x={1061} w={37}>
        <path d="M1079.500 702.500h7v8h-7zM1076.500 702v-3h3M1086.500 699.500h3v3M1089.500 710v3h-3M1079.500 713.500h-3v-3" />
      </StatusIcon>
      <span className="w-[25px] tracking-[-0.300px] text-[#48556f]">70%</span>
      <StatusIcon x={1123} w={243}>
        <Down x={1123.500} y={705} />
        <path d="M1141 706.500h10M1313 706.500h10M1318 701.500v10" strokeWidth="2" />
        <path d="M1209 706.500h92M1231.500 703v7" stroke="#c9ced8" />
        <path d="M1163 706.500h42" stroke="#4d5a75" />
        <circle cx="1209" cy="706.500" r="5.700" fill="#f1f2f4" stroke="#444b58" />
        <path d="M1336.500 703v-3.500h3.500M1346 699.500h3.500v3.500M1349.500 710v3.500h-3.500M1340 713.500h-3.500V710M1337 700l4 4M1349 700l-4 4M1349 713l-4-4M1337 713l4-4" />
      </StatusIcon>
    </div>
  );
}

function TaskbarApps() {
  return (
    <svg className="shrink-0" width="491" height="48" viewBox="493 720 491 48">
      <defs>
        <linearGradient id="chat" x1="0" y1="0" x2="1" y2="1"><stop stopColor="#8579c5" /><stop offset="1" stopColor="#4b52c9" /></linearGradient>
        <linearGradient id="fire" x1=".8" y1="0" x2=".2" y2="1"><stop stopColor="#ffe12e" /><stop offset=".5" stopColor="#ff7a1c" /><stop offset="1" stopColor="#f0255f" /></linearGradient>
        <linearGradient id="edge" x1="0" y1="0" x2="1" y2=".5"><stop stopColor="#1d9fe0" /><stop offset=".5" stopColor="#2cbfc8" /><stop offset="1" stopColor="#60d860" /></linearGradient>
        <linearGradient id="dark" x1="0" y1="0" x2="1" y2="1"><stop stopColor="#4a4a4a" /><stop offset="1" stopColor="#161616" /></linearGradient>
        <linearGradient id="pane" x1="0" y1="0" x2="1" y2="1"><stop stopColor="#fff" /><stop offset="1" stopColor="#dedede" /></linearGradient>
        <linearGradient id="bag" x1="0" y1="0" x2="0" y2="1"><stop stopColor="#1668ac" /><stop offset="1" stopColor="#123c6d" /></linearGradient>
        <linearGradient id="folder" x1="0" y1="0" x2="1" y2="1"><stop stopColor="#ffdc6b" /><stop offset="1" stopColor="#fbbd24" /></linearGradient>
      </defs>
      <rect x="505" y="740" width="18" height="17" rx="1" fill="url(#dark)" />
      <rect x="511" y="734" width="18" height="17" rx="1" fill="url(#pane)" />
      <rect x="511" y="740" width="12" height="11" fill="#b5b6b5" />
      <path d="M560.500 733.500a11.500 11.500 0 1 1-5 22.200l-6.500 2 1.500-6.500a11.500 11.500 0 0 1 10-17.700z" fill="url(#chat)" />
      <rect x="554" y="740" width="9.500" height="9.500" rx="2" fill="#fff" />
      <path d="M564 743.500l3-2v6.500l-3-2z" fill="#fff" />
      <path d="M593 735q0-1.500 1.500-1.500h6.500l2.500 3v3H593z" fill="#dda008" />
      <path d="M593 739h8.500l2.500-2h12q1 0 1 1v18.500q0 1-1 1h-22q-1 0-1-1z" fill="url(#folder)" />
      <path d="M597.500 757.500v-5q0-3 3-3h9q3 0 3 3v5z" fill="#1278cb" />
      <path d="M600.500 753.500h9" stroke="#0a4f91" strokeWidth="1.500" />
      <path d="M655.500 733l5.500 2.500v20l-5.500 2.500z" fill="#29a0ee" />
      <path d="M655.500 733v6.500L640.500 753l-3-2.500v-1.500z" fill="#0b6fbd" />
      <path d="M655.500 758v-6.500L640.500 738.500l-3 2v2z" fill="#1287d2" />
      <path d="M687.500 740v-5.500h10v5.500" stroke="#3bb7ec" strokeWidth="2" fill="none" />
      <path d="M681 738.500h23V755q0 3.500-3.500 3.500h-16q-3.500 0-3.500-3.500z" fill="url(#bag)" />
      <path d="M688 743h4.200v4.200H688z" fill="#f25022" /><path d="M693 743h4.200v4.200H693z" fill="#7fba00" />
      <path d="M688 749h4.200v4.200H688z" fill="#39b8f1" /><path d="M693 749h4.200v4.200H693z" fill="#ffb900" />
      <rect x="725" y="733" width="24" height="25" fill="#fff" />
      <text x="737" y="742.500" textAnchor="middle" textLength="21" lengthAdjust="spacingAndGlyphs" fontFamily="Liberation Sans" fontWeight="bold" fontSize="6.500" fill="#222">amazon</text>
      <path d="M731 743.500q6 3 11 0" stroke="#f29b38" strokeWidth="1.200" fill="none" />
      <path d="M731 749h17l-2 7h-14z" fill="#529ac4" />
      <path d="M733 751.500h13M734 754h12" stroke="#d8edf8" strokeDasharray="1.500 1.500" />
      <path d="M726 748h3.500l3 9.500h14" stroke="#286b9d" fill="none" />
      <path d="M771 739l1.500-3 2 2.500q3-2.500 6-1.500l2.500-4q6 3 9 7 2.500 15-11 17.500-10.500-.5-11.500-11 0-5 1.500-7.500z" fill="url(#fire)" />
      <circle cx="781" cy="744.500" r="5" fill="#3c5fc0" />
      <path d="M776 741q5 1 7 4l-5 1q2 4 7 2-2 4-7 2-5-3-2-9z" fill="#ff9b22" />
      <path d="M782 734q8 4 9 9-2 2-4-2-4-2-5-7z" fill="#ffe13a" />
      <path d="M819 733.500l6 4-6 4-6-4zM831 733.500l6 4-6 4-6-4zM819 741.500l6 4-6 4-6-4zM831 741.500l6 4-6 4-6-4zM825 747.500l6 4-6 4-6-4z" fill="#000" />
      <path d="M869 733.500l9 5q1 .6 1 2v9l-5 3v-9l-5-3-4-2z" fill="#5361c8" />
      <path d="M869 733.500l4.500 2.500-4.500 4.500-5 3v8l-3 3.500-2.500-3v-12q0-1 1-2z" fill="#4fb0e0" />
      <path d="M858.500 748v3q0 1 1 2l8.500 5q1 .5 2 0l9-5.500v-5l-5 0-5 3-5-3z" fill="#a06bd6" />
      <path d="M869 740.500l5 3v5.500l-5 3-5-3v-5.500z" fill="#e0ebc6" />
      <circle cx="913" cy="745.500" r="12" fill="#1565b5" />
      <path d="M901 745a12 12 0 0 1 24 0q0 6-7 6-5-1-3-4 1-6-5-6-7 0-9 4z" fill="url(#edge)" />
      <path d="M909 747q-1 7 6 9 5 1 8-3-6 4-10-.5-2-3 2-6-3-3-6 .5z" fill="#dce9c8" />
      <circle cx="958" cy="745.500" r="11.500" fill="#df5636" /><path d="M958 734a11.500 11.500 0 0 1 11.500 11.500H958z" fill="#ff967a" />
      <rect x="945" y="739" width="12" height="13" rx="1" fill="#c23a1d" />
      <text x="951" y="749.300" textAnchor="middle" fontFamily="Open Sans" fontWeight="bold" fontSize="10.500" fill="#fff">P</text>
      <g fill="#80866f"><rect x="866" y="763" width="6" height="3" rx="1.500" /><rect x="910" y="763" width="6" height="3" rx="1.500" /><rect x="954" y="763" width="6" height="3" rx="1.500" /></g>
    </svg>
  );
}

function Taskbar() {
  return (
    <div className="flex h-12 items-center bg-[linear-gradient(90deg,#dadad6_0%,#dedfcb_7%,#dee2c8_17%,#d6e3cd_29%,#ecdcb4_36.500%,#ecdcc8_42%,#efe0c0_50%,#dae2c8_54%,#d8e8b9_64%,#dae0c9_74%,#dee2c3_84%,#dbdcd0_100%)] text-[12px] whitespace-nowrap text-[#1c1c1a] shadow-[inset_0_1px_0_#c9cbbf]">
      <TaskIcon x={0} w={52}>
        <path d="M26 751.500q-5-1-5-5t5-4q2-5.500 7-5 4.500.5 5.500 5 5 .5 5 4.500-.5 4-5 4.500z" fill="#a3c0f1" stroke="#7da3e7" />
        <path d="M24 748q8-4 17 0" stroke="#d1e0fa" strokeWidth="2" />
      </TaskIcon>
      <div className="w-[296px] pt-px leading-[16px]">
        <div className="text-[11.500px] tracking-[-0.200px]">26°C</div>
        <div className="text-[11.500px] text-[#62635c]">Cloudy</div>
      </div>
      <svg className="shrink-0" width="45" height="48" viewBox="348 720 45 48">
        <defs><linearGradient id="win" x1="0" y1="0" x2="1" y2="1"><stop stopColor="#4fd0ff" /><stop offset="1" stopColor="#0473d1" /></linearGradient></defs>
        <path d="M355 733h11v11h-11zM367 733h11v11h-11zM355 745h11v11h-11zM367 745h11v11h-11z" fill="url(#win)" />
      </svg>
      <div className="flex h-[30px] w-[98px] shrink-0 items-center rounded-full bg-[#f4f5ee] shadow-sm">
        <Icon x={393} w={41} y={729} h={30} color="#1c1c1a">
          <circle cx="423.500" cy="743.500" r="5" strokeWidth="1.400" /><path d="M420 747.500l-4.500 4" strokeWidth="1.600" />
        </Icon>
        <span className="text-[11.500px] tracking-[-0.150px]">Search</span>
      </div>
      <div className="w-[2px] shrink-0" />
      <TaskbarApps />
      <div className="-ml-[2px] flex h-[41px] w-[38px] shrink-0 items-center justify-center rounded-[4px] bg-[#f0f2e6]">
        <Icon x={982} w={38} y={725} h={41}>
          <rect x="989" y="733" width="24" height="25" fill="#26375d" stroke="none" />
          <path d="M1001 738l7 3.500v8l-7 4-7-4v-8z" fill="#2f7de8" stroke="none" />
          <path d="M996 742.500l2.500 6 2.500-4 2.500 4 2.500-6z" stroke="#fff" />
          <rect x="1007" y="731" width="8" height="9" rx="2" fill="#699bf5" stroke="none" />
          <path d="M1008.500 734v3.500l2.500-2 2.500 2V734" stroke="#fff" strokeWidth=".9" />
          <rect x="993" y="763" width="16" height="3" rx="1.500" fill="#0876d5" stroke="none" />
        </Icon>
      </div>
      <div className="flex-1" />
      <TaskIcon x={1095} w={37} color="#222"><path d="M1109.500 747l5.500-5.500 5.500 5.500" strokeWidth="1.400" /></TaskIcon>
      <div className="w-[34px] text-center text-[11.500px] leading-[16px] tracking-[-0.200px]">ENG<br />US</div>
      <TaskIcon x={1166} w={90} color="#222">
        <path d="M1179.500 742.500q7.500-7 15 0M1182 745q5-5 10 0M1184.500 747.500q2.500-2.500 5 0" />
        <circle cx="1187" cy="749" r="1.300" fill="#222" stroke="none" />
        <path d="M1203.500 742v4.500h2.500l3.500 3.500v-11.500l-3.500 3.500zM1212 741.500q2 2.500 0 5.500M1214.500 739.500q3.500 4.500 0 9.500M1217 738q4.500 6 0 12" />
        <rect x="1227.500" y="739.500" width="13" height="9" rx="2" /><path d="M1230 741.500h4v5h-4z" fill="#222" stroke="none" /><path d="M1242 742v4" strokeWidth="2" />
      </TaskIcon>
      <div className="w-[62px] text-right text-[11.500px] leading-[16px] tracking-[-0.200px]">3:33 pm<br />30/12/2022</div>
      <div className="mr-[18px] ml-[10px] flex h-[17px] w-5 items-center justify-center rounded-full bg-[#0b78d6] text-[11px] text-white">21</div>
    </div>
  );
}

export default function App() {
  return (
    <div className="flex h-[768px] w-[1366px] flex-col overflow-hidden bg-white font-['Noto_Sans',sans-serif]">
      <TitleBar />
      <MenuBar />
      <Ribbon />
      <Workspace />
      <StatusBar />
      <Taskbar />
    </div>
  );
}
